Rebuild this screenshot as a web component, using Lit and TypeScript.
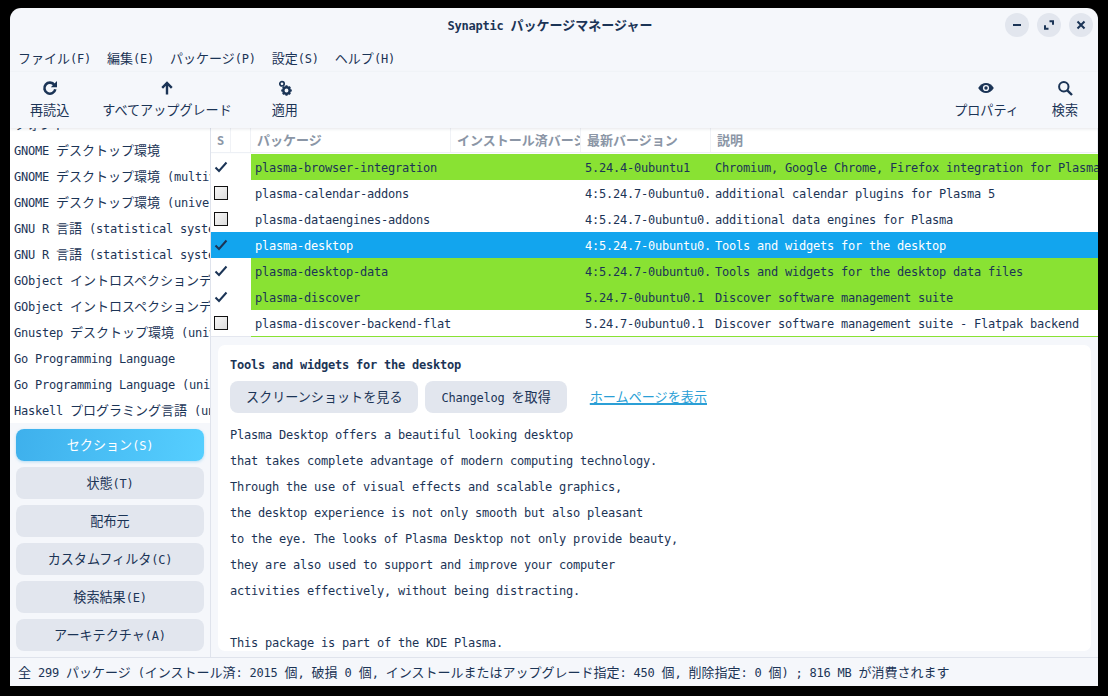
import { LitElement, html, css, svg } from "lit";
import { customElement } from "lit/decorators.js";

const t = (s: string) =>
  html`<span>${s
    .split(/([\u3000-\u9fff\uff00-\uffef]+)/)
    .map((p, i) => (i % 2 ? html`<span class="j">${p}</span>` : p))}</span>`;

const icons = {
  reload: svg`<path d="M12.400 5A5.500 5.500 0 1 0 13.300 9.200" fill="none" stroke="currentColor" stroke-width="2.600"/><path d="M8.800 7.200h6.200V1z" fill="currentColor"/>`,
  up: svg`<path d="M8 14.500V3.500M3.200 7.800 8 3l4.800 4.800" fill="none" stroke="currentColor" stroke-width="2.400"/>`,
  gear: svg`<circle cx="5" cy="3.800" r="2.200" fill="none" stroke="currentColor" stroke-width="1.700"/><circle cx="9.500" cy="10.500" r="3.200" fill="none" stroke="currentColor" stroke-width="2.500"/><path d="M9.500 5.200v2M9.500 13.800v2M4.200 10.500h2M12.800 10.500h2M5.800 6.800l1.400 1.400M11.800 12.800l1.400 1.400M5.800 14.200l1.400-1.400M11.800 8.200l1.400-1.400" stroke="currentColor" stroke-width="2"/>`,
  eye: svg`<path d="M.2 8C2.300 4.800 5 3 8 3S13.700 4.800 15.800 8C13.700 11.200 11 13 8 13S2.300 11.200 .2 8Z" fill="currentColor"/><circle cx="8" cy="8" r="3.100" fill="#f5f7fb"/><circle cx="8" cy="8" r="1.700" fill="currentColor"/>`,
  search: svg`<circle cx="6.800" cy="6.800" r="4.700" fill="none" stroke="currentColor" stroke-width="2"/><path d="m10.300 10.300 4.700 4.700" stroke="currentColor" stroke-width="2.400"/>`,
};

const sideRows = [
  "フォント",
  "GNOME デスクトップ環境",
  "GNOME デスクトップ環境 (multiverse)",
  "GNOME デスクトップ環境 (universe)",
  "GNU R 言語 (statistical system)",
  "GNU R 言語 (statistical system) (universe)",
  "GObject イントロスペクションデータ",
  "GObject イントロスペクションデータ (universe)",
  "Gnustep デスクトップ環境 (universe)",
  "Go Programming Language",
  "Go Programming Language (universe)",
  "Haskell プログラミング言語 (universe)",
];
const filters = ["セクション(S)", "状態(T)", "配布元", "カスタムフィルタ(C)", "検索結果(E)", "アーキテクチャ(A)"];
const rows: [string, string, string, string, string][] = [
  ["on", "green", "plasma-browser-integration", "5.24.4-0ubuntu1", "Chromium, Google Chrome, Firefox integration for Plasma"],
  ["off", "", "plasma-calendar-addons", "4:5.24.7-0ubuntu0.1", "additional calendar plugins for Plasma 5"],
  ["off", "", "plasma-dataengines-addons", "4:5.24.7-0ubuntu0.1", "additional data engines for Plasma"],
  ["on", "sel", "plasma-desktop", "4:5.24.7-0ubuntu0.1", "Tools and widgets for the desktop"],
  ["on", "green", "plasma-desktop-data", "4:5.24.7-0ubuntu0.1", "Tools and widgets for the desktop data files"],
  ["on", "green", "plasma-discover", "5.24.7-0ubuntu0.1", "Discover software management suite"],
  ["off", "", "plasma-discover-backend-flatpak", "5.24.7-0ubuntu0.1", "Discover software management suite - Flatpak backend"],
];
const lines = [
  "Plasma Desktop offers a beautiful looking desktop",
  "that takes complete advantage of modern computing technology.",
  "Through the use of visual effects and scalable graphics,",
  "the desktop experience is not only smooth but also pleasant",
  "to the eye. The looks of Plasma Desktop not only provide beauty,",
  "they are also used to support and improve your computer",
  "activities effectively, without being distracting.",
  "",
  "This package is part of the KDE Plasma.",
];

@customElement("app-root")
export class AppRoot extends LitElement {
  static styles = css`
    :host {
      display: block;
      width: 1108px;
      height: 696px;
      box-sizing: border-box;
      padding: 8px 10px 10px;
      background: #000;
      font-family: "DejaVu Sans Mono", "Noto Sans CJK JP", monospace;
      font-size: 12px;
      letter-spacing: -0.224px;
      color: #1b3456;
    }
    .j {
      font-family: "Noto Sans CJK JP", sans-serif;
      font-size: 13px;
      letter-spacing: 0;
      line-height: 1;
    }
    .tool .j, .btn .j, .link .j { font-size: 13.1px; }
    .window {
      height: 678px;
      background: #f5f7fb;
      border-radius: 11px 11px 0 0;
      display: flex;
      flex-direction: column;
      overflow: hidden;
    }
    .title {
      height: 34px;
      flex: none;
      display: grid;
      grid-template-columns: 1fr auto 1fr;
      align-items: center;
      padding: 0 5px 0 0;
    }
    .title b { font-weight: 700; grid-column: 2; margin-right: 3px; }
    .title b .j { font-weight: 700; }
    .wbtns { display: flex; gap: 8px; justify-content: flex-end; }
    .wbtn {
      width: 24px; height: 24px; border-radius: 50%; background: #e2e6ee;
      display: flex; align-items: center; justify-content: center;
    }
    .wbtn svg { width: 12px; height: 12px; }
    .menu {
      height: 30px;
      flex: none;
      display: flex;
      gap: 16px;
      align-items: center;
      padding: 2px 8px 0;
      box-sizing: border-box;
    }
    .toolbar {
      height: 56px;
      flex: none;
      display: flex;
      gap: 33px;
      padding: 0 20px;
      position: relative;
      z-index: 1;
      box-shadow: 0 1px 3px rgba(40, 50, 70, 0.12);
    }
    .spacer { flex: 1; }
    .tool {
      display: flex; flex-direction: column; align-items: center;
      padding-top: 8px; box-sizing: border-box; height: 56px;
    }
    .tool svg { width: 16px; height: 16px; margin-bottom: 7px; }
    .tool + .tool.apply { margin-left: 7px; }
    .main { flex: 1; min-height: 0; display: flex; }
    .side {
      width: 200px; flex: none; display: flex; flex-direction: column;
      border-right: 1px solid #dfe3ec;
    }
    .list {
      height: 295px; flex: none; background: #fff; overflow: hidden;
      display: flex; flex-direction: column; justify-content: flex-end;
    }
    .srow {
      height: 26px; flex: none; line-height: 28px; padding-left: 4px;
      white-space: nowrap; overflow: hidden; width: 196px;
    }
    .filters { flex: 1; display: flex; flex-direction: column; gap: 6px; padding: 6px; }
    .btn {
      height: 32px; border-radius: 8px; background: #e2e6ee;
      display: flex; align-items: center; justify-content: center; white-space: pre;
      flex: none;
    }
    .btn.active {
      background: linear-gradient(100deg, #3eb0ec, #56cfff);
      color: #fff;
      box-shadow: 0 1px 3px rgba(60, 170, 230, 0.35);
    }
    .right { flex: 1; min-width: 0; display: flex; flex-direction: column; }
    .table { background: #fff; height: 209px; flex: none; overflow: hidden; }
    .cols { display: grid; grid-template-columns: 20px 20px 200px 130px 130px 1fr; }
    .head { height: 24px; color: #8b96a6; font-weight: 700; margin-bottom: 2px; box-shadow: 0 1px 1px #edf0f5; }
    .head > div {
      padding-left: 6px; line-height: 26px; height: 24px; overflow: hidden; white-space: nowrap;
      box-sizing: border-box; border-right: 1px solid #f0f2f6;
    }
    .head > div .j { font-weight: 700; }
    .row { height: 26px; }
    .row > div { line-height: 28px; height: 26px; overflow: hidden; white-space: nowrap; padding-left: 4px; box-sizing: border-box; }
    .row .c { padding: 0; display: flex; align-items: center; justify-content: center; grid-column: 1 / span 2; width: 20px; }
    .row .cell2 { grid-column: 3; }
    .row.green > div:not(.c) { background: #89e233; }
    .row.sel { background: #12a5ee; }
    .row.sel > div:not(.c) { color: #fff; }
    .box {
      width: 12px; height: 12px; border: 1px solid #111;
      background: linear-gradient(135deg, #f8f8f8, #dcdcdc);
    }
    .check { width: 14px; height: 14px; }
    .endline { height: 1px; background: #e4e7ef; padding-left: 40px; }
    .endline div { height: 1px; background: #89e233; }
    .detail { flex: 1; min-height: 0; padding: 8px 7px 6px; display: flex; }
    .card {
      flex: 1; background: #fff; border-radius: 7px; padding: 12px; overflow: hidden; min-width: 0;
    }
    .card h1 { font: inherit; font-weight: 700; margin: 0; height: 16px; line-height: 16px; }
    .acts { display: flex; gap: 7px; align-items: center; margin-top: 8px; }
    .acts .btn { padding: 0 16px; }
    .link { color: #2b9fd6; text-decoration: underline; text-decoration-thickness: 1.500px; margin-left: 16px; }
    .para { margin-top: 9px; }
    .para div { height: 26px; line-height: 26px; white-space: pre; }
    .status {
      height: 29px; flex: none; border-top: 1px solid #dfe3ec; box-sizing: border-box;
      display: flex; align-items: center; padding-left: 8px; white-space: pre;
    }
  `;

  icon(p: unknown) {
    return html`<svg viewBox="0 0 16 16">${p}</svg>`;
  }

  render() {
    return html`<div class="window">
      <div class="title">
        <b>${t("Synaptic パッケージマネージャー")}</b>
        <div class="wbtns">
          <div class="wbtn"><svg viewBox="0 0 12 12"><path d="M2 6h8" stroke="#1b3456" stroke-width="2"/></svg></div>
          <div class="wbtn"><svg viewBox="0 0 12 12"><path d="M6.500 2.300H10V5.800M5.500 9.700H2V6.200" fill="none" stroke="#1b3456" stroke-width="2"/></svg></div>
          <div class="wbtn"><svg viewBox="0 0 12 12"><path d="m2.500 2.500 7 7m0-7-7 7" stroke="#1b3456" stroke-width="2"/></svg></div>
        </div>
      </div>
      <div class="menu">
        ${["ファイル(F)", "編集(E)", "パッケージ(P)", "設定(S)", "ヘルプ(H)"].map((m) => html`<div>${t(m)}</div>`)}
      </div>
      <div class="toolbar">
        <div class="tool">${this.icon(icons.reload)}<div>${t("再読込")}</div></div>
        <div class="tool">${this.icon(icons.up)}<div>${t("すべてアップグレード")}</div></div>
        <div class="tool apply">${this.icon(icons.gear)}<div>${t("適用")}</div></div>
        <div class="spacer"></div>
        <div class="tool">${this.icon(icons.eye)}<div>${t("プロパティ")}</div></div>
        <div class="tool">${this.icon(icons.search)}<div>${t("検索")}</div></div>
      </div>
      <div class="main">
        <div class="side">
          <div class="list">${sideRows.map((r) => html`<div class="srow">${t(r)}</div>`)}</div>
          <div class="filters">
            ${filters.map((f, i) => html`<div class="btn ${i === 0 ? "active" : ""}">${t(f)}</div>`)}
          </div>
        </div>
        <div class="right">
          <div class="table">
            <div class="cols head">
              <div>S</div><div></div>
              <div>${t("パッケージ")}</div>
              <div>${t("インストール済バージョン")}</div>
              <div>${t("最新バージョン")}</div>
              <div>${t("説明")}</div>
            </div>
            ${rows.map(
              (r) => html`<div class="cols row ${r[1]}">
                <div class="c">
                  ${r[0] === "on"
                    ? html`<svg class="check" viewBox="0 0 14 14"><path d="m1.500 7.500 3.500 3.500 7.500-8.500" fill="none" stroke="#1b3456" stroke-width="2"/></svg>`
                    : html`<div class="box"></div>`}
                </div>
                <div class="cell2">${r[2]}</div>
                <div></div>
                <div>${r[3]}</div>
                <div>${r[4]}</div>
              </div>`
            )}
            <div class="endline"><div></div></div>
          </div>
          <div class="detail">
            <div class="card">
              <h1>Tools and widgets for the desktop</h1>
              <div class="acts">
                <div class="btn">${t("スクリーンショットを見る")}</div>
                <div class="btn">${t("Changelog を取得")}</div>
                <div class="link">${t("ホームページを表示")}</div>
              </div>
              <div class="para">${lines.map((l) => html`<div>${l}</div>`)}</div>
            </div>
          </div>
        </div>
      </div>
      <div class="status">${t("全 299 パッケージ (インストール済: 2015 個, 破損 0 個, インストールまたはアップグレード指定: 450 個, 削除指定: 0 個) ; 816 MB が消費されます")}</div>
    </div>`;
  }
}
